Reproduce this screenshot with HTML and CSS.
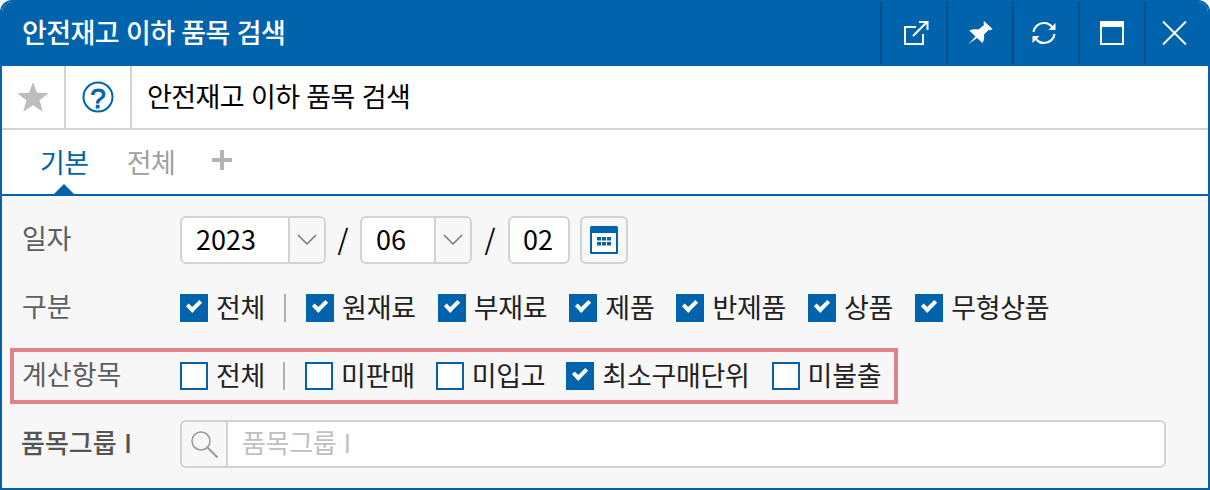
FILE: index.html
```html
<!DOCTYPE html>
<html lang="ko">
<head>
<meta charset="utf-8">
<title>안전재고 이하 품목 검색</title>
<link rel="stylesheet" href="styles.css">
</head>
<body>
<div class="window">
  <header class="titlebar">
    <div class="title">안전재고 이하 품목 검색</div>
    <div class="winbtns">
      <button class="winbtn"><svg width="28" height="28" viewBox="-2 0 28 28" fill="none" stroke="#fff" stroke-width="2"><path d="M14 8H3V25H21V15"/><path d="M11 17L25 3"/><path d="M17 3H25.500V11"/></svg></button>
      <button class="winbtn"><svg width="28" height="28" viewBox="0 0 28 28" fill="#fff"><path d="M18 2C17.500 3.500 17.500 5 18 6L12.500 10.500C9.500 10 6 10.200 3.300 11.500L9.500 17.500L2.300 25.300L11 19L16.500 24C18 21.500 18.500 18.500 18 15.500L22.500 11C24 11.500 25.500 11 26.500 10Z"/></svg></button>
      <button class="winbtn"><svg width="28" height="28" viewBox="2 0 28 28" fill="none" stroke="#fff" stroke-width="2.200"><path d="M3.500 13C4 8 8.500 4 14 4C17.500 4 20.500 5.800 22.500 8.500"/><path d="M24.500 15C24 20 19.500 24 14 24C10.500 24 7.500 22.200 5.500 19.500"/><path d="M25.500 4V11H18.500Z" fill="#fff" stroke="none"/><path d="M2.500 24V17H9.500Z" fill="#fff" stroke="none"/></svg></button>
      <button class="winbtn"><svg width="28" height="28" viewBox="0 0 28 28" fill="none" stroke="#fff"><rect x="3" y="3" width="22" height="22" stroke-width="2"/><rect x="2" y="2" width="24" height="6" fill="#fff" stroke="none"/></svg></button>
      <button class="winbtn winbtn-last"><svg width="28" height="28" viewBox="2.500 0 28 28" fill="none" stroke="#fff" stroke-width="1.800"><path d="M2.500 2.500L25.500 25.500M25.500 2.500L2.500 25.500"/></svg></button>
    </div>
  </header>
  <div class="toolbar">
    <div class="toolcell toolcell-star">
      <svg width="32" height="30" viewBox="0 0 32 30"><path d="M16 0L20 10.800L31.800 11.200L22.500 18.300L25.800 29.700L16 23.200L6.200 29.700L9.500 18.300L0.200 11.200L12 10.800Z" fill="#bdbdbd"/></svg>
    </div>
    <div class="toolcell toolcell-help">
      <svg width="32" height="32" viewBox="0 0 32 32" fill="none" stroke="#0063ab"><circle cx="16" cy="16" r="14.500" stroke-width="2"/><text class="helpmark" x="16" y="27" text-anchor="middle">?</text></svg>
    </div>
    <div class="pagetitle">안전재고 이하 품목 검색</div>
  </div>
  <nav class="tabs">
    <span class="tab active">기본</span>
    <span class="tab">전체</span>
    <svg class="plus" width="20" height="20" viewBox="0 0 20 20"><path d="M0 8H8V0H12V8H20V12H12V20H8V12H0Z" fill="#b4b4b4"/></svg>
  </nav>
  <main class="content">
    <div class="row row-date">
      <label class="lbl">일자</label>
      <div class="controls date">
        <div class="select sel-year"><span class="val">2023</span><span class="arrow"><svg width="20" height="12" viewBox="0 0 20 12" fill="none" stroke="#777" stroke-width="1.500"><path d="M1 1L10 10L19 1"/></svg></span></div>
        <span class="slash">/</span>
        <div class="select sel-month"><span class="val">06</span><span class="arrow"><svg width="20" height="12" viewBox="0 0 20 12" fill="none" stroke="#777" stroke-width="1.500"><path d="M1 1L10 10L19 1"/></svg></span></div>
        <span class="slash slash-wide">/</span>
        <div class="select sel-day"><span class="val">02</span></div>
        <button class="calbtn"><svg width="28" height="28" viewBox="0 0 28 28"><rect x="0" y="0" width="28" height="28" rx="1.500" fill="#0063ab"/><rect x="2" y="7" width="24" height="19" fill="#fff"/><path d="M7 11h4v3.500H7zM12 11h4v3.500h-4zM17 11h4v3.500h-4zM7 16h4v3.500H7zM12 16h4v3.500h-4zM17 16h4v3.500h-4z" fill="#0063ab"/></svg></button>
      </div>
    </div>
    <div class="row row-kind">
      <label class="lbl">구분</label>
      <div class="controls checks">
        <span class="chk on"><i></i>전체</span><span class="sep"></span>
        <span class="chk on"><i></i>원재료</span>
        <span class="chk on"><i></i>부재료</span>
        <span class="chk on"><i></i>제품</span>
        <span class="chk on"><i></i>반제품</span>
        <span class="chk on"><i></i>상품</span>
        <span class="chk on"><i></i>무형상품</span>
      </div>
    </div>
    <div class="row row-calc">
      <label class="lbl">계산항목</label>
      <div class="controls checks">
        <span class="chk"><i></i>전체</span><span class="sep"></span>
        <span class="chk"><i></i>미판매</span>
        <span class="chk"><i></i>미입고</span>
        <span class="chk on"><i></i>최소구매단위</span>
        <span class="chk"><i></i>미불출</span>
      </div>
    </div>
    <div class="row row-group">
      <label class="lbl strong">품목그룹 I</label>
      <div class="search">
        <span class="searchicon"><svg width="28" height="28" viewBox="0 0 28 28" fill="none" stroke="#9a9a9a" stroke-width="1.500"><circle cx="11" cy="11" r="9"/><path d="M17.500 17.500L27.500 27.500" stroke-width="2"/></svg></span>
        <span class="placeholder">품목그룹 I</span>
      </div>
    </div>
  </main>
</div>
</body>
</html>
```

FILE: styles.css
```css
* { box-sizing: border-box; }
html, body { margin: 0; padding: 0; background: #fff; }
body {
  width: 1210px;
  height: 490px;
  overflow: hidden;
  font-family: "Noto Sans CJK KR", "Noto Sans", sans-serif;
  color: #000;
}
.window {
  width: 1210px;
  height: 490px;
  border: 2px solid #0063ab;
  border-radius: 12px 12px 0 0;
  display: flex;
  flex-direction: column;
  overflow: hidden;
  background: #fff;
}
.titlebar {
  height: 64px;
  flex: none;
  background: #0063ab;
  display: flex;
  justify-content: space-between;
  align-items: stretch;
  padding-bottom: 2px;
}
.title {
  color: #fff;
  font-size: 27px;
  font-weight: 500;
  letter-spacing: -0.6px;
  line-height: 60px;
  padding-left: 20px;
}
.winbtns { display: flex; }
.winbtn {
  width: 66px;
  padding: 0;
  border: 0;
  border-left: 2px solid #004f8c;
  background: transparent;
  display: flex;
  align-items: center;
  justify-content: center;
}
.winbtn-last { width: 64px; }
.winbtn svg { overflow: visible; }
.toolbar {
  height: 64px;
  flex: none;
  display: flex;
  align-items: stretch;
  border-bottom: 2px solid #d2d2d2;
}
.toolcell {
  flex: none;
  border-right: 2px solid #d2d2d2;
  display: flex;
  align-items: center;
  justify-content: center;
}
.toolcell-star { width: 64px; }
.toolcell-help { width: 66px; }
.helpmark {
  font-size: 28px;
  font-weight: 400;
  fill: #0063ab;
  stroke: #0063ab;
  stroke-width: 0.9px;
  font-family: "Liberation Sans", sans-serif;
}
.pagetitle {
  font-size: 27px;
  font-weight: 400;
  letter-spacing: -0.6px;
  line-height: 60px;
  padding-left: 15px;
}
.tabs {
  height: 66px;
  flex: none;
  display: flex;
  align-items: center;
  gap: 38px;
  padding: 0 0 0 38px;
  border-bottom: 2px solid #0063ab;
}
.tab {
  font-size: 27px;
  line-height: 40px;
  font-weight: 400;
  color: #a0a0a0;
  letter-spacing: -0.5px;
  position: relative;
}
.tab.active { color: #0063ab; }
.tab.active::after {
  content: "";
  position: absolute;
  left: 50%;
  margin-left: -10px;
  bottom: -12px;
  border-left: 10px solid transparent;
  border-right: 10px solid transparent;
  border-bottom: 10px solid #0063ab;
}
.plus { margin-left: -1px; margin-bottom: 4px; }
.content {
  flex: 1;
  background: #f7f7f7;
  display: flex;
  flex-direction: column;
  padding: 20px 0 0 8px;
}
.row {
  display: flex;
  align-items: center;
  width: 1158px;
  flex: none;
}
.lbl {
  width: 170px;
  flex: none;
  padding: 0 0 4px 12px;
  font-size: 27px;
  line-height: 40px;
  color: #5e5e5e;
}
.lbl.strong { font-size: 26px; font-weight: 500; color: #555; padding-left: 11px; }
.controls { display: flex; align-items: center; }
.row-date { height: 48px; }
.row-kind { height: 32px; margin-top: 28px; }
.row-calc {
  height: 56px;
  margin-top: 24px;
  width: 888px;
  border: 4px solid #e0828c;
}
.row-calc .lbl { width: 166px; padding-left: 8px; }
.row-calc .chk { margin-right: 21px; }
.row-calc .chk.on { margin-right: 22px; }
.row-group { height: 48px; margin-top: 16px; }
.select {
  height: 48px;
  border: 2px solid #d2d2d2;
  border-radius: 6px;
  background: #fff;
  display: flex;
  align-items: stretch;
  font-size: 27px;
  overflow: hidden;
}
.val { flex: 1; line-height: 42px; padding-left: 14px; }
.sel-day .val { padding-left: 13px; }
.sel-year { width: 146px; }
.sel-month { width: 112px; }
.sel-day { width: 62px; }
.arrow {
  width: 36px;
  flex: none;
  border-left: 2px solid #d2d2d2;
  background: #f7f7f7;
  display: flex;
  align-items: center;
  justify-content: center;
}
.slash {
  width: 34px;
  text-align: center;
  font-size: 28px;
  line-height: 42px;
}
.slash-wide { width: 36px; }
.calbtn {
  width: 48px;
  height: 48px;
  margin-left: 10px;
  padding: 0;
  border: 2px solid #d2d2d2;
  border-radius: 6px;
  background: #f7f7f7;
  display: flex;
  align-items: center;
  justify-content: center;
}
.checks { font-size: 27px; letter-spacing: -0.3px; color: #222; line-height: 36px; }
.chk {
  display: flex;
  align-items: center;
  margin-right: 22px;
  padding-bottom: 2px;
  white-space: nowrap;
}
.chk i {
  width: 28px;
  height: 28px;
  flex: none;
  margin: 2px 8px 0 0;
  border: 2px solid #0063ab;
  background: #fff;
  position: relative;
}
.chk.on i { background: #0063ab; }
.chk.on i::after {
  content: "";
  position: absolute;
  left: 5px;
  top: 4px;
  width: 10px;
  height: 5px;
  box-sizing: content-box;
  border-left: 4px solid #fff;
  border-bottom: 4px solid #fff;
  transform: rotate(-45deg);
}
.sep {
  width: 2px;
  height: 28px;
  background: #b0b0b0;
  margin: 0 20px 0 -3px;
}
.search {
  width: 986px;
  height: 48px;
  border: 2px solid #d2d2d2;
  border-radius: 6px;
  background: #fff;
  display: flex;
  align-items: stretch;
  overflow: hidden;
}
.searchicon {
  width: 46px;
  flex: none;
  background: #f7f7f7;
  border-right: 2px solid #d2d2d2;
  display: flex;
  align-items: center;
  justify-content: center;
}
.placeholder {
  padding-left: 14px;
  font-size: 26px;
  letter-spacing: -0.3px;
  color: #c0c0c0;
  line-height: 40px;
}
```
